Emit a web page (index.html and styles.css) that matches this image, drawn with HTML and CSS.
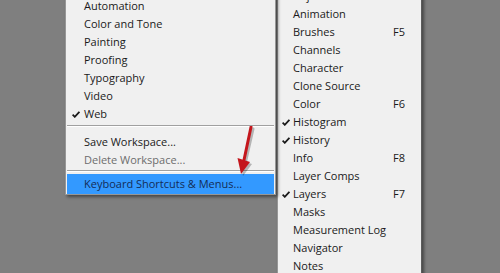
FILE: index.html
```html
<!DOCTYPE html>
<html lang="en">
<head>
<meta charset="UTF-8">
<title>Window menu</title>
<link rel="stylesheet" href="styles.css">
</head>
<body>
<div class="desk">
    <div class="menu sub">
        <div class="item">Automation</div>
        <div class="item">Color and Tone</div>
        <div class="item">Painting</div>
        <div class="item">Proofing</div>
        <div class="item">Typography</div>
        <div class="item">Video</div>
        <div class="item checked"><svg class="tick" viewBox="0 0 8 7"><path d="M0.6 3.6 L2.8 5.8 L7.4 0.8"/></svg>Web</div>
        <div class="sep first"></div>
        <div class="item">Save Workspace...</div>
        <div class="item disabled">Delete Workspace...</div>
        <div class="sep second"></div>
        <div class="item active">Keyboard Shortcuts &amp; Menus...</div>
    </div>
    <div class="menu main">
        <div class="item">Adjustments</div>
        <div class="item">Animation</div>
        <div class="item">Brushes<span class="key">F5</span></div>
        <div class="item">Channels</div>
        <div class="item">Character</div>
        <div class="item">Clone Source</div>
        <div class="item">Color<span class="key">F6</span></div>
        <div class="item checked"><svg class="tick" viewBox="0 0 8 7"><path d="M0.6 3.6 L2.8 5.8 L7.4 0.8"/></svg>Histogram</div>
        <div class="item checked"><svg class="tick" viewBox="0 0 8 7"><path d="M0.6 3.6 L2.8 5.8 L7.4 0.8"/></svg>History</div>
        <div class="item">Info<span class="key">F8</span></div>
        <div class="item">Layer Comps</div>
        <div class="item checked"><svg class="tick" viewBox="0 0 8 7"><path d="M0.6 3.6 L2.8 5.8 L7.4 0.8"/></svg>Layers<span class="key">F7</span></div>
        <div class="item">Masks</div>
        <div class="item">Measurement Log</div>
        <div class="item">Navigator</div>
        <div class="item">Notes</div>
    </div>
    <svg class="arrow" viewBox="0 0 30 60" width="30" height="60">
        <g class="shade">
            <path d="M22 3 L14.5 36" />
            <polygon points="8.5,34 21,38 12,50" />
        </g>
        <g class="ink">
            <path d="M20 1 L13 34" />
            <polygon points="6.5,32 19,36 10,48" />
        </g>
    </svg>
</div>
</body>
</html>
```

FILE: styles.css
```css
html, body {
    margin: 0;
    padding: 0;
    height: 100%;
    overflow: hidden;
}
body {
    background-color: #7f7f7f;
    font-family: "Open Sans", "Noto Sans", sans-serif;
    font-size: 11px;
    color: #1a1a1a;
}

.desk {
    position: relative;
    display: flex;
    align-items: flex-start;
    padding-left: 65px;
}

/*  MENUS  */
.menu {
    background-color: #f0f0f0;
    border: 1px solid #979797;
    display: flex;
    flex-direction: column;
}
.sub {
    width: 207px;
    margin-top: -5px;
    padding: 1px 1px 0 1px;
    z-index: 2;
    box-shadow: 2px 2px 3px rgba(0, 0, 0, 0.45);
}
.main {
    width: 143px;
    margin-top: -15px;
    margin-left: 1px;
    padding: 1px 0;
    border-right-color: #5c5c5c;
    box-shadow: 2px 2px 3px rgba(0, 0, 0, 0.45);
    z-index: 1;
}

.item {
    position: relative;
    height: 18px;
    line-height: 18px;
    white-space: nowrap;
    display: flex;
    align-items: center;
}
.sub .item {
    padding-left: 17px;
}
.main .item {
    padding-left: 15px;
}
.key {
    margin-left: auto;
    width: 28px;
}
.disabled {
    color: #6d6d6d;
}
.active {
    height: 20px;
    background-color: #3399ff;
    color: #142d57;
}

.tick {
    position: absolute;
    width: 8px;
    height: 7px;
    top: 6px;
    fill: none;
    stroke: #1a1a1a;
    stroke-width: 1.8;
}
.sub .tick {
    left: 5px;
}
.main .tick {
    left: 4px;
}

.sep {
    border-top: 1px solid #a0a0a0;
    border-bottom: 1px solid #ffffff;
}
.sep.first {
    margin: 2px 0 6px 0;
}
.sep.second {
    margin: 1px 0 2px 0;
}

/*  ARROW  */
.arrow {
    position: absolute;
    left: 231px;
    top: 126px;
    z-index: 3;
}
.arrow path {
    fill: none;
    stroke-width: 3;
    stroke-linecap: round;
}
.ink path {
    stroke: #c4161c;
}
.ink polygon {
    fill: #c4161c;
}
.shade path {
    stroke: rgba(0, 0, 0, 0.25);
}
.shade polygon {
    fill: rgba(0, 0, 0, 0.25);
}
```
